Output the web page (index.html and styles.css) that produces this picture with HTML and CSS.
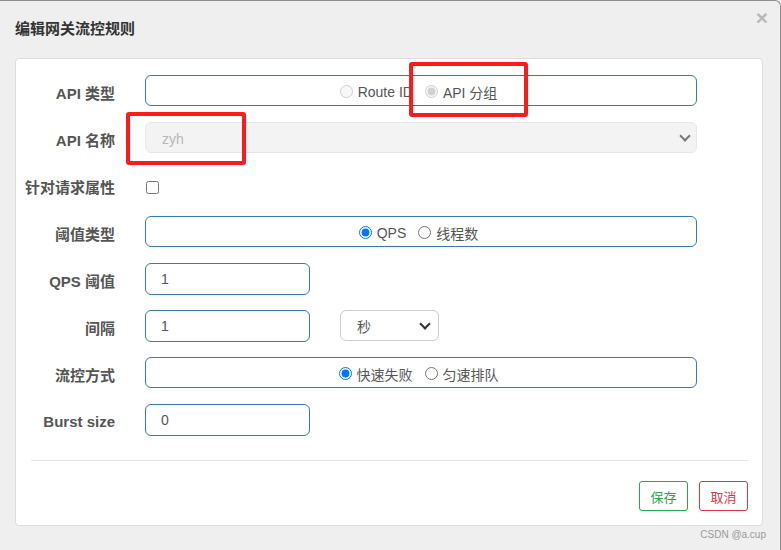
FILE: index.html
```html
<!DOCTYPE html>
<html lang="zh">
<head>
<meta charset="utf-8">
<link rel="stylesheet" href="styles.css">
</head>
<body>
<div class="modal">
  <div class="modal-header">
    <h4 class="title">编辑网关流控规则</h4>
    <span class="close">×</span>
  </div>
  <div class="panel">
    <div class="form">
      <label class="lbl">API 类型</label>
      <div class="box"><label class="opt"><input type="radio" name="t" disabled>Route ID</label><label class="opt"><input type="radio" name="t" checked disabled>API 分组</label></div>

      <label class="lbl">API 名称</label>
      <div class="sel-wrap sel-wrap-wide"><select class="sel sel-wide" disabled><option>zyh</option></select></div>

      <label class="lbl">针对请求属性</label>
      <div class="chk-wrap"><input type="checkbox" class="chk"></div>

      <label class="lbl">阈值类型</label>
      <div class="box"><label class="opt"><input type="radio" name="g" checked>QPS</label><label class="opt"><input type="radio" name="g">线程数</label></div>

      <label class="lbl">QPS 阈值</label>
      <div><input class="inp" type="text" value="1"></div>

      <label class="lbl">间隔</label>
      <div class="pair"><input class="inp" type="text" value="1"><div class="sel-wrap sel-wrap-unit"><select class="sel sel-unit"><option>秒</option></select></div></div>

      <label class="lbl">流控方式</label>
      <div class="box"><label class="opt"><input type="radio" name="c" checked>快速失败</label><label class="opt"><input type="radio" name="c">匀速排队</label></div>

      <label class="lbl">Burst size</label>
      <div><input class="inp" type="text" value="0"></div>
    </div>
    <hr class="sep">
    <div class="actions">
      <button class="btn btn-save">保存</button>
      <button class="btn btn-cancel">取消</button>
    </div>
  </div>
  <div class="mark">CSDN @a.cup</div>
  <div class="anno anno-1"></div>
  <div class="anno anno-2"></div>
</div>
</body>
</html>
```
FILE: styles.css
```css
* { box-sizing: border-box; }
html, body { margin: 0; padding: 0; }
body {
  font-family: "Liberation Sans", "Noto Sans CJK SC", sans-serif;
  font-size: 14px;
  color: #555;
  background: #efefef;
}
.modal {
  position: relative;
  width: 781px;
  height: 550px;
  background: #efefef;
  border-top: 1px solid #8f8f8f;
  border-right: 1px solid #8f8f8f;
  border-radius: 0 6px 0 0;
  overflow: hidden;
}
.modal-header {
  display: flex;
  justify-content: space-between;
  align-items: center;
  height: 57px;
  padding: 0 12px 0 15px;
}
.title {
  margin: 0 0 4px 0;
  font-size: 15px;
  font-weight: bold;
  color: #333;
}
.close {
  font-size: 21px;
  font-weight: bold;
  color: #b8b8b8;
  line-height: 1;
  align-self: flex-start;
  margin-top: 6px;
}
.panel {
  margin: 0 17px 0 15px;
  height: 468px;
  background: #fff;
  border: 1px solid #ddd;
  border-radius: 4px;
  padding: 16px 15px 0 15px;
}
.form {
  display: grid;
  grid-template-columns: 84px 552px;
  grid-auto-rows: 31px;
  column-gap: 30px;
  row-gap: 16px;
}
.lbl {
  display: flex;
  align-items: center;
  justify-content: flex-end;
  font-size: 15px;
  font-weight: bold;
  color: #555;
  white-space: nowrap;
  padding-top: 4px;
}
.box {
  border: 1px solid #337ab7;
  border-radius: 6px;
  display: flex;
  justify-content: center;
  align-items: center;
  gap: 9px;
  color: #555;
  padding: 2px 8px 0 0;
}
.opt {
  display: inline-flex;
  align-items: center;
}
.opt input {
  margin: 0 5px 0 3px;
  width: 13px;
  height: 13px;
}
.sel-wrap {
  position: relative;
}
.sel-wrap::after {
  content: "";
  position: absolute;
  top: 10px;
  width: 6px;
  height: 6px;
  border-right: 2px solid #333;
  border-bottom: 2px solid #333;
  transform: rotate(45deg);
  pointer-events: none;
}
.sel-wrap-wide::after { right: 8px; border-color: #777; }
.sel-wrap-unit { margin-left: 30px; }
.sel-wrap-unit::after { right: 10px; }
.sel {
  appearance: none;
  -webkit-appearance: none;
  font-family: inherit;
  font-size: 14px;
  height: 31px;
  border-radius: 6px;
  padding: 2px 16px 0 16px;
}
.sel-wide {
  width: 552px;
  background: #eee;
  border: 1px solid #ddd;
  color: #999;
}
.sel-unit {
  width: 99px;
  background: #fff;
  border: 1px solid #ccc;
  color: #555;
}
.chk-wrap {
  display: flex;
  align-items: center;
  padding-top: 5px;
}
.chk {
  margin: 0 0 0 1px;
  width: 13px;
  height: 13px;
}
.inp {
  width: 165px;
  height: 32px;
  border: 1px solid #337ab7;
  border-radius: 6px;
  padding: 0 15px;
  font-family: inherit;
  font-size: 14px;
  color: #555;
  background: #fff;
}
.pair {
  display: flex;
  align-items: flex-start;
}
.sep {
  margin: 25px 0 0 0;
  border: 0;
  border-top: 1px solid #e3e3e3;
  width: 717px;
}
.actions {
  display: flex;
  justify-content: flex-end;
  gap: 11px;
  margin-top: 20px;
  width: 717px;
}
.btn {
  font-family: inherit;
  font-size: 13px;
  width: 49px;
  height: 30px;
  border-radius: 3px;
  background: #fff;
  padding: 0;
}
.btn-save { border: 1px solid #28a745; color: #28a745; }
.btn-cancel { border: 1px solid #dc3545; color: #dc3545; }
.mark {
  text-align: right;
  padding: 3px 14px 0 0;
  font-size: 10px;
  color: #9a9a9a;
}
.anno {
  position: absolute;
  border: 4px solid #ff1a1a;
  border-radius: 3px;
}
.anno-1 { left: 409px; top: 61px; width: 119px; height: 55px; }
.anno-2 { left: 126px; top: 111px; width: 120px; height: 53px; }
```
